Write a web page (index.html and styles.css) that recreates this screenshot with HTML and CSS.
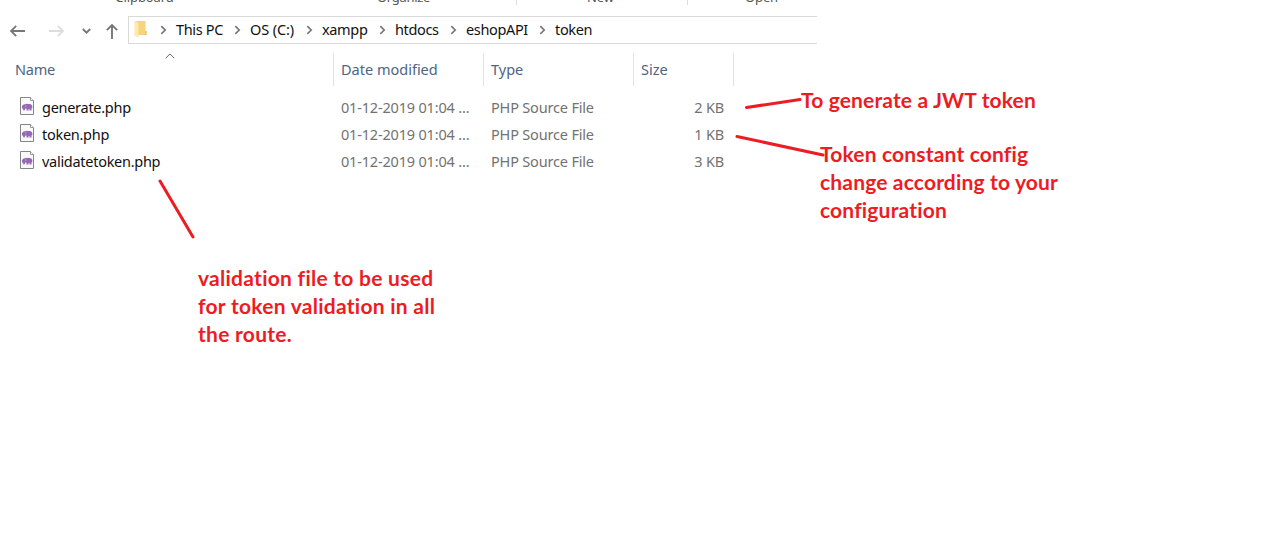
FILE: index.html
```html
<!DOCTYPE html>
<html lang="en">
<head>
<meta charset="utf-8">
<title>token</title>
<link rel="stylesheet" href="styles.css">
</head>
<body>
<svg class="defs" width="0" height="0">
  <symbol id="chev" viewBox="0 0 7 10"><path d="M1.3 1.2 5.2 5 1.3 8.8" fill="none" stroke="#777" stroke-width="1.7"/></symbol>
  <symbol id="php" viewBox="0 0 15 19">
    <path d="M.5.5h10l3 3v14H.5z" fill="#fafafa" stroke="#858585"/>
    <path d="M10.500.5v3h3" fill="#fff" stroke="#999"/>
    <path transform="translate(0 .8)" d="M2 8.500Q3 6.300 5 6.500L6 6.300Q7 5.800 8 6.300L10 6.300Q12 6.500 12.300 8.500V10.500H11.500V12.800H9.500V11.200H8.500V12.800H6.500V11L5.500 10.500 4.500 12.800 3 12.500 3.300 11 2 10.600z" fill="#9568b5"/>
    <path d="M5.800 8V10.300" stroke="#c5aad6" stroke-width=".7"/>
  </symbol>
</svg>
<main class="window">
  <div class="ribbon">
    <span class="group clipboard">Clipboard</span><span class="group organize">Organize</span><span class="group new">New</span><span class="group open">Open</span>
  </div>
  <nav class="navbar">
    <svg class="arrows" width="128" height="30" viewBox="0 0 128 30" fill="none">
      <path d="M11 15H25M16.200 9.800 11 15 16.200 20.200" stroke="#777" stroke-width="1.8"/>
      <path d="M49 15H63M57.800 9.800 63 15 57.800 20.200" stroke="#ddd" stroke-width="1.800"/>
      <path d="M82.800 13 86.500 16.700 90.200 13" stroke="#777" stroke-width="1.900"/>
      <path d="M112 23V9M106.800 14.200 112 9 117.200 14.200" stroke="#777" stroke-width="1.900"/>
    </svg>
    <div class="address">
      <svg class="folder" width="13" height="18" viewBox="0 0 13 18"><path d="M1 1H11.500V11H12.500V15H4L1 14z" fill="#f5d47a"/><path d="M.5 1 4.500 2.500V17.500L.5 15.500z" fill="#ffe9a8"/><path d="M11 11H12.500V15H11z" fill="#eec45f"/></svg>
      <svg class="chev"><use href="#chev"/></svg><span class="crumb c1">This PC</span>
      <svg class="chev"><use href="#chev"/></svg><span class="crumb c2">OS (C:)</span>
      <svg class="chev"><use href="#chev"/></svg><span class="crumb c3">xampp</span>
      <svg class="chev"><use href="#chev"/></svg><span class="crumb c4">htdocs</span>
      <svg class="chev"><use href="#chev"/></svg><span class="crumb c5">eshopAPI</span>
      <svg class="chev"><use href="#chev"/></svg><span class="crumb">token</span>
    </div>
  </nav>
  <section class="files">
    <div class="row head">
      <span class="cell name">Name<svg class="sort" width="10" height="6" viewBox="0 0 10 6"><path d="M.7 5.200 5 .9 9.300 5.200" fill="none" stroke="#666"/></svg></span><span class="cell">Date modified</span><span class="cell">Type</span><span class="cell size">Size</span>
    </div>
    <div class="row"><span class="cell file"><svg class="php"><use href="#php"/></svg><span>generate.php</span></span><span class="cell date">01-12-2019 01:04 ...</span><span class="cell type">PHP Source File</span><span class="cell kb">2 KB</span></div>
    <div class="row"><span class="cell file"><svg class="php"><use href="#php"/></svg><span>token.php</span></span><span class="cell date">01-12-2019 01:04 ...</span><span class="cell type">PHP Source File</span><span class="cell kb">1 KB</span></div>
    <div class="row"><span class="cell file"><svg class="php"><use href="#php"/></svg><span>validatetoken.php</span></span><span class="cell date">01-12-2019 01:04 ...</span><span class="cell type">PHP Source File</span><span class="cell kb">3 KB</span></div>
  </section>
</main>
<svg class="marks" width="1283" height="549"><path d="M746.500 107.500 800 99.500M737 136.500 823 155M160 181 193 237"/></svg>
<p class="note generate">To generate a JWT token</p>
<p class="note config">Token constant config<br>change according to your<br>configuration</p>
<p class="note validate">validation file to be used<br>for token validation in all<br>the route.</p>
</body>
</html>
```
FILE: styles.css
```css
* { box-sizing: border-box; }
body { margin: 0; width: 1283px; height: 549px; overflow: hidden; position: relative; background: #fff; color: #111; font: 14.500px/27px "Noto Sans", sans-serif; letter-spacing: -.3px; white-space: nowrap; }
.defs { position: absolute; }
.window { width: 817px; }
.ribbon { height: 16px; display: grid; grid-template-columns: 289px 228px 171px 147px; overflow: hidden; font-size: 13px; line-height: 16px; color: #555; letter-spacing: -.1px; }
.group { height: 5px; display: flex; align-items: flex-end; justify-content: center; border-right: 1px solid #ddd; }
.clipboard, .open { border-right: 0; }
.organize { letter-spacing: -.3px; padding-left: 2px; }
.new { padding-right: 3px; }
.navbar { display: flex; height: 28px; }
.address { flex: 1; display: flex; align-items: center; border: 1px solid #d9d9d9; border-right: 0; padding-left: 5px; height: 28px; }
.folder { margin: -2px 13px 0 0; }
.chev { width: 7px; height: 10px; margin-right: 9px; margin-top: -1px; flex: none; }
.crumb { flex: none; margin-top: -2px; letter-spacing: -.35px; }
.c1 { width: 58px; }
.c2 { width: 56px; letter-spacing: -.1px; }
.c3 { width: 57px; }
.c4 { width: 55px; }
.c5 { width: 73px; }
.files { padding-top: 9px; width: 734px; }
.row { display: grid; grid-template-columns: 334px 150px 150px 100px; height: 27px; }
.cell { padding-left: 7px; color: #727272; }
.head { height: 32px; margin-bottom: 9px; line-height: 33px; }
.head .cell { border-right: 1px solid #e2e2e2; color: #4d6485; letter-spacing: 0; }
.head .name { padding-left: 15px; position: relative; letter-spacing: -.2px; }
.sort { position: absolute; left: 165px; top: 0; }
.file { display: flex; align-items: center; padding-left: 20px; gap: 7px; color: #111; letter-spacing: -.28px; }
.date, .type { letter-spacing: -.18px; }
.php { width: 15px; height: 19px; margin-top: -2px; }
.kb { text-align: right; padding-right: 10px; letter-spacing: -.15px; }
.marks { position: absolute; inset: 0; fill: none; stroke: #ed1c24; stroke-width: 3; stroke-linecap: round; }
.note { position: absolute; margin: 0; color: #ed1c24; font: bold 21px/28px Lato, sans-serif; font-variant-ligatures: none; }
.generate { left: 801px; top: 86px; letter-spacing: .15px; }
.config { left: 820px; top: 140px; letter-spacing: .17px; }
.validate { left: 198px; top: 264px; letter-spacing: .27px; }
```
